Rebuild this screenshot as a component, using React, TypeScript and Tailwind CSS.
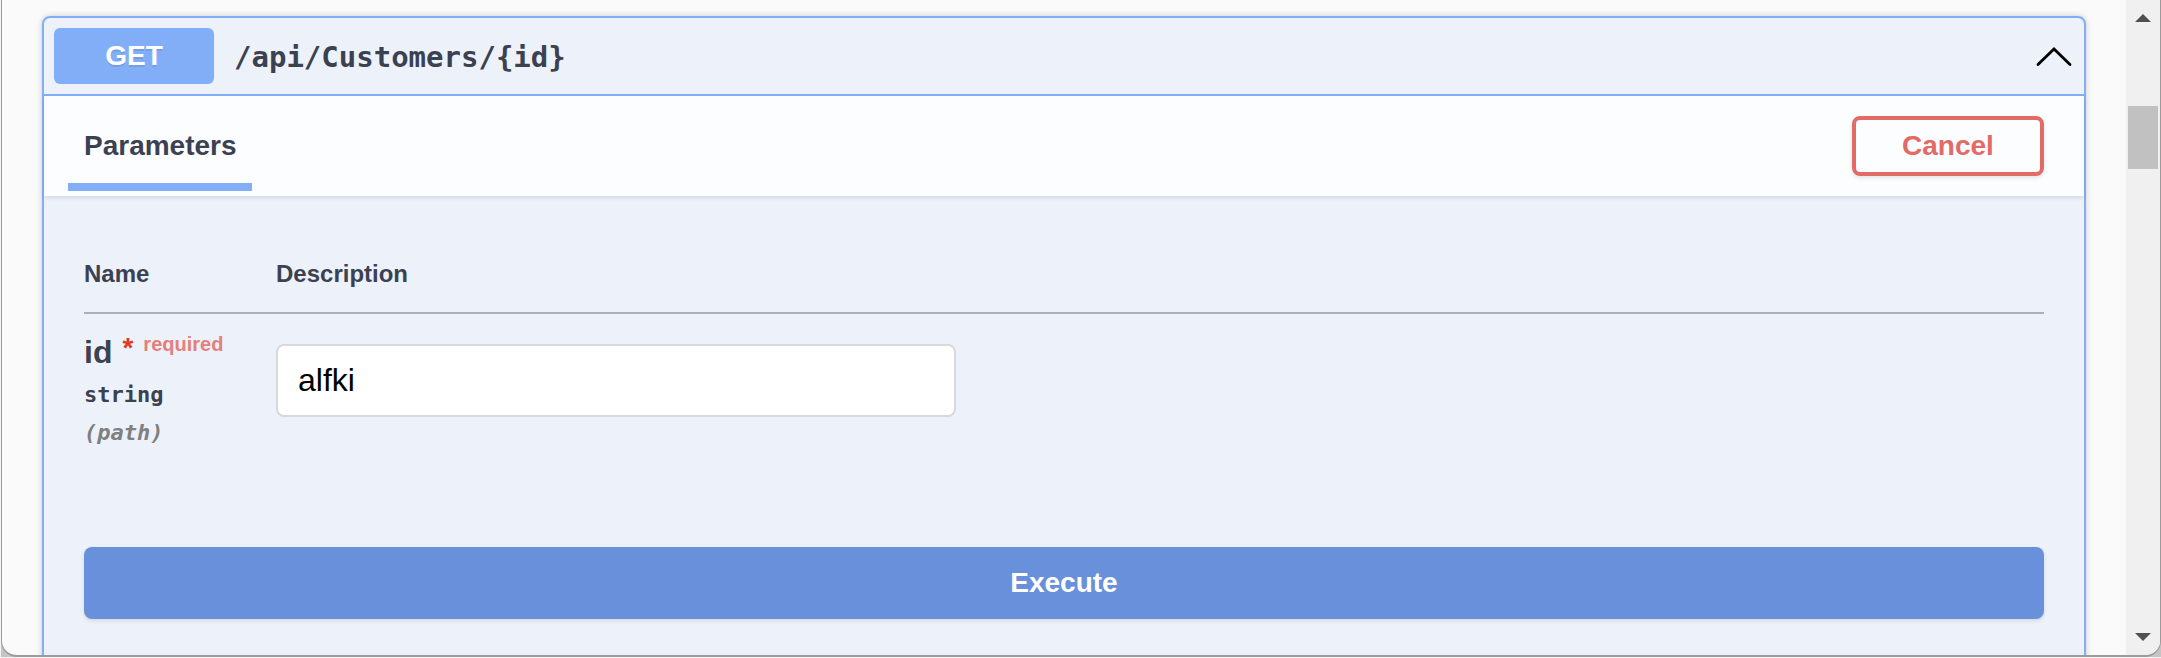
import { useState } from "react";

export default function App() {
  const [id, setId] = useState("alfki");

  return (
    <div className="h-screen bg-[#f4f4f4] pb-px pl-px font-['Liberation_Sans',Arial,sans-serif] text-[#3b4151]">
      <div className="h-full bg-[#c4c4c4]">
        <div className="flex h-full overflow-hidden rounded-b-[16px] border-x border-b-2 border-[#9b9b9b] bg-[#fafafa]">
          <main className="min-w-0 flex-1 overflow-hidden px-10 pt-4">
            <section className="min-h-screen rounded-lg border-2 border-[#82aef8] bg-[#edf2fa] shadow-[0_0_6px_rgba(0,0,0,0.19)]">
              <header className="flex items-center border-b-2 border-[#82aef8] p-2.5">
                <span className="flex h-14 w-40 items-center justify-center rounded-md bg-[#82aef8] text-[28px] leading-8 font-bold text-white [text-shadow:0_2px_0_rgba(0,0,0,0.1)]">
                  GET
                </span>
                <a
                  href="#get-customer"
                  className="pt-0.5 pl-5 font-['DejaVu_Sans_Mono',monospace] text-[29px] leading-9 font-bold"
                >
                  {"/api/Customers/{id}"}
                </a>
                <button type="button" aria-label="Collapse operation" className="ml-auto">
                  <svg viewBox="0 0 40 40" className="size-10" fill="none" stroke="#000" strokeWidth="2.8" strokeLinecap="round">
                    <path d="M4 28.5 20 13 36 28.5" strokeLinejoin="miter" />
                  </svg>
                </button>
              </header>

              <div className="flex h-[100px] items-center justify-between bg-[#fcfdff] pr-10 pl-6 shadow-[0_2px_4px_rgba(0,0,0,0.1)]">
                <h4 className="flex h-[90px] items-center border-b-8 border-[#82aef8] pt-2 pr-[15px] pl-4 text-[28px] leading-8 font-bold">
                  Parameters
                </h4>
                <button
                  type="button"
                  className="h-[60px] w-48 rounded-lg border-4 border-[#e36b66] text-[28px] leading-8 font-bold text-[#e36b66] shadow-[0_2px_4px_rgba(0,0,0,0.1)]"
                >
                  Cancel
                </button>
              </div>

              <div className="px-10 pt-10">
                <table className="w-full border-collapse">
                  <thead>
                    <tr className="h-[77px] border-b-2 border-[#abb0bb] text-left text-2xl">
                      <th className="w-48">Name</th>
                      <th>Description</th>
                    </tr>
                  </thead>
                  <tbody>
                    <tr className="align-top">
                      <td className="pt-[18px]">
                        <label htmlFor="param-id" className="flex items-start text-[32px] leading-10 font-bold">
                          id
                          <span className="pl-2.5 text-[28px] leading-8 text-[#e03a26]">*</span>
                          <span className="pl-2.5 text-xl leading-6 text-[#e57f7c]">required</span>
                        </label>
                        <div className="pt-1 font-['DejaVu_Sans_Mono',monospace] text-[22px] leading-[38px] font-bold">
                          string
                        </div>
                        <div className="font-['DejaVu_Sans_Mono',monospace] text-[22px] leading-[38px] font-bold text-[#808080] italic">
                          (path)
                        </div>
                      </td>
                      <td className="pt-[30px]">
                        <input
                          id="param-id"
                          type="text"
                          value={id}
                          onChange={(e) => setId(e.target.value)}
                          className="block h-[73px] w-[680px] rounded-lg border-2 border-[#d9d9d9] bg-white px-5 text-[32px] text-black outline-none"
                        />
                      </td>
                    </tr>
                  </tbody>
                </table>
                <button
                  type="button"
                  className="mt-[95px] h-[72px] w-full rounded-lg bg-[#6990da] text-[28px] leading-8 font-bold text-white shadow-[0_2px_4px_rgba(0,0,0,0.1)]"
                >
                  Execute
                </button>
              </div>
            </section>
          </main>

          <aside aria-label="Scrollbar" className="flex w-[34px] flex-col items-center bg-[#f0f0f0] py-3.5">
            <svg viewBox="0 0 16 8" className="h-2 w-4" fill="#505050">
              <path d="M8 0 16 8H0Z" />
            </svg>
            <div className="mt-[84px] h-[63px] w-[30px] bg-[#c1c1c1]" />
            <svg viewBox="0 0 16 8" className="mt-auto h-2 w-4" fill="#505050">
              <path d="M0 0H16L8 8Z" />
            </svg>
          </aside>
        </div>
      </div>
    </div>
  );
}
